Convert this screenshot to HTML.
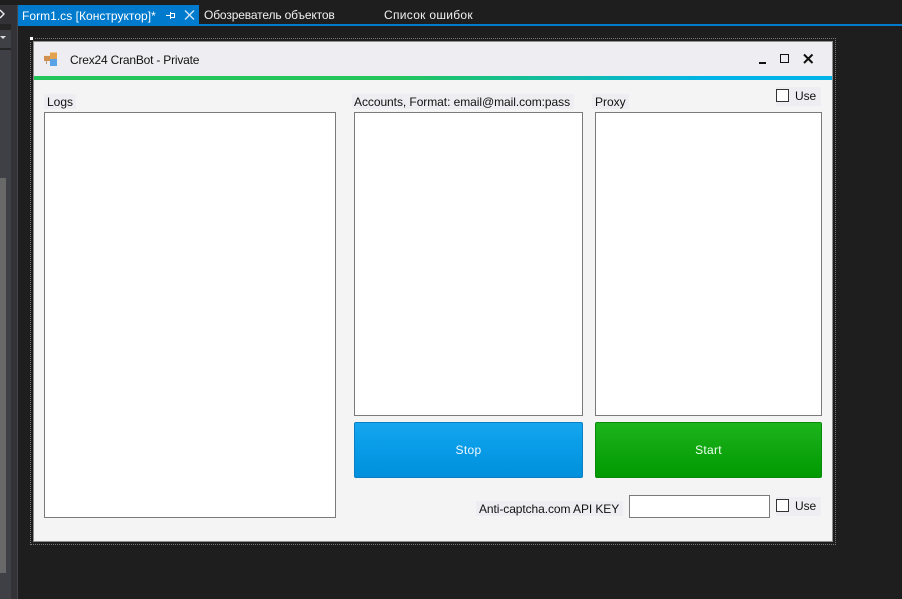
<!DOCTYPE html>
<html><head><meta charset="utf-8"><style>
html,body{margin:0;padding:0;background:#1e1e1e}
body{width:902px;height:599px;position:relative;overflow:hidden;font-family:"Liberation Sans",sans-serif;font-size:12px;color:#111}
div{position:absolute;box-sizing:border-box}
.t{white-space:nowrap;line-height:16px}
.box{background:#fff;border:1px solid #7a7a7a}
.lbl{background:#eeeef2;height:15px}
.cb{width:13px;height:13px;border:1px solid #333;background:#fff}
</style></head><body>
<div style="left:0;top:0;width:11px;height:599px;background:#3f3f46"></div>
<div style="left:11px;top:0;width:6px;height:599px;background:#333337"></div>
<div style="left:17px;top:0;width:1px;height:599px;background:#45454a"></div>
<div style="left:0;top:178px;width:6px;height:395px;background:#686868"></div>
<div style="left:0;top:0;width:18px;height:5px;background:#1e1e1e"></div>
<div style="left:0;top:5px;width:11px;height:19px;background:#333337"></div>
<div style="left:0;top:24px;width:11px;height:6px;background:#252526"></div>
<div style="left:0;top:48px;width:11px;height:2px;background:#252526"></div>
<svg style="position:absolute;left:0;top:9px" width="8" height="12"><path d="M0 1 L4 5 L0 9" stroke="#eee" stroke-width="1.400" fill="none"/></svg>
<svg style="position:absolute;left:0;top:35px" width="8" height="5"><path d="M0 1H6L3 4Z" fill="#ddd"/></svg>
<div style="left:18px;top:24px;width:884px;height:2px;background:#007acc"></div>
<div style="left:18px;top:5px;width:181px;height:20px;background:#007acc"></div>
<div class="t" style="left:22px;top:8px;color:#fff;letter-spacing:.03px">Form1.cs [Конструктор]*</div>
<svg style="position:absolute;left:165px;top:9px" width="30" height="13"><path d="M1 6.500H5M5.500 3V10M5.500 4.500H9.500V8.500H5.500" stroke="#fff" fill="none"/><path d="M20 1.500L29 10.500M29 1.500L20 10.500" stroke="#cfe6f8" stroke-width="1.400" fill="none"/></svg>
<div class="t" style="left:204px;top:7px;color:#f1f1f1;letter-spacing:-.14px">Обозреватель объектов</div>
<div class="t" style="left:384px;top:7px;color:#f1f1f1;letter-spacing:.3px">Список ошибок</div>

<div style="left:30px;top:38px;width:806px;height:507px;border:1px dotted #777"></div>
<div style="left:29px;top:36px;width:5px;height:5px;background:#fff;border:1px solid #222"></div>
<div style="left:33px;top:41px;width:800px;height:501px;background:#f4f4f4;border:1px solid #8f8f8f"></div>
<div style="left:34px;top:42px;width:798px;height:34px;background:#eeeef2"></div>
<div style="left:34px;top:76px;width:798px;height:4px;background:linear-gradient(90deg,#22c55a 0%,#22c55a 45%,#00b4ea 85%,#00b4ea 100%)"></div>

<svg style="position:absolute;left:44px;top:52px" width="14" height="14"><rect x="6" y="0" width="7" height="7" fill="#e2a24e"/><rect x="6" y="0" width="7" height="1" fill="#f0c890"/><rect x="6" y="7" width="7" height="7" fill="#5aa2e8"/><rect x="0" y="3" width="6" height="6" fill="#cf9050"/><rect x="0" y="3" width="6" height="1" fill="#f4e4d0"/><rect x="2" y="9" width="1" height="3" fill="#b89878"/></svg>
<div class="t" style="left:70px;top:52px;letter-spacing:-.2px">Crex24 CranBot - Private</div>
<svg style="position:absolute;left:756px;top:52px" width="64" height="16"><path d="M3 11H10" stroke="#111" stroke-width="2" fill="none"/><rect x="24.500" y="2.500" width="8" height="8" fill="none" stroke="#111"/><path d="M24 2.500H33" stroke="#111" stroke-width="1"/><path d="M48 2.500L56.500 11M56.500 2.500L48 11" stroke="#111" stroke-width="2" fill="none"/></svg>

<div class="lbl" style="left:44px;top:94px;width:32px"></div>
<div class="t" style="left:47px;top:94px">Logs</div>
<div class="lbl" style="left:352px;top:94px;width:222px"></div>
<div class="t" style="left:354px;top:94px;letter-spacing:-.06px">Accounts, Format: email@mail.com:pass</div>
<div class="lbl" style="left:592px;top:94px;width:37px"></div>
<div class="t" style="left:595px;top:94px">Proxy</div>
<div class="lbl" style="left:776px;top:87px;width:45px;height:19px"></div>
<div class="cb" style="left:776px;top:89px"></div>
<div class="t" style="left:795px;top:88px;letter-spacing:-.1px">Use</div>

<div class="box" style="left:44px;top:112px;width:292px;height:406px"></div>
<div class="box" style="left:354px;top:112px;width:229px;height:304px"></div>
<div class="box" style="left:595px;top:112px;width:227px;height:304px"></div>

<div style="left:354px;top:422px;width:229px;height:56px;border-radius:2px;border:1px solid #0b7fc4;background:linear-gradient(#15a6ee,#0a9de8 40%,#0090dc)"></div>
<div class="t" style="left:354px;top:442px;width:229px;text-align:center;color:#f0f8ff;letter-spacing:.3px">Stop</div>
<div style="left:595px;top:422px;width:227px;height:56px;border-radius:2px;border:1px solid #0a8a0a;background:linear-gradient(#1cb51c,#12a812 40%,#009a00)"></div>
<div class="t" style="left:595px;top:442px;width:227px;text-align:center;color:#f0fff0;letter-spacing:.3px">Start</div>

<div class="lbl" style="left:476px;top:501px;width:147px"></div>
<div class="t" style="left:479px;top:501px;letter-spacing:-.08px">Anti-captcha.com API KEY</div>
<div class="box" style="left:629px;top:495px;width:141px;height:23px"></div>
<div class="lbl" style="left:776px;top:497px;width:45px;height:19px"></div>
<div class="cb" style="left:776px;top:499px"></div>
<div class="t" style="left:795px;top:498px;letter-spacing:-.1px">Use</div>
</body></html>
